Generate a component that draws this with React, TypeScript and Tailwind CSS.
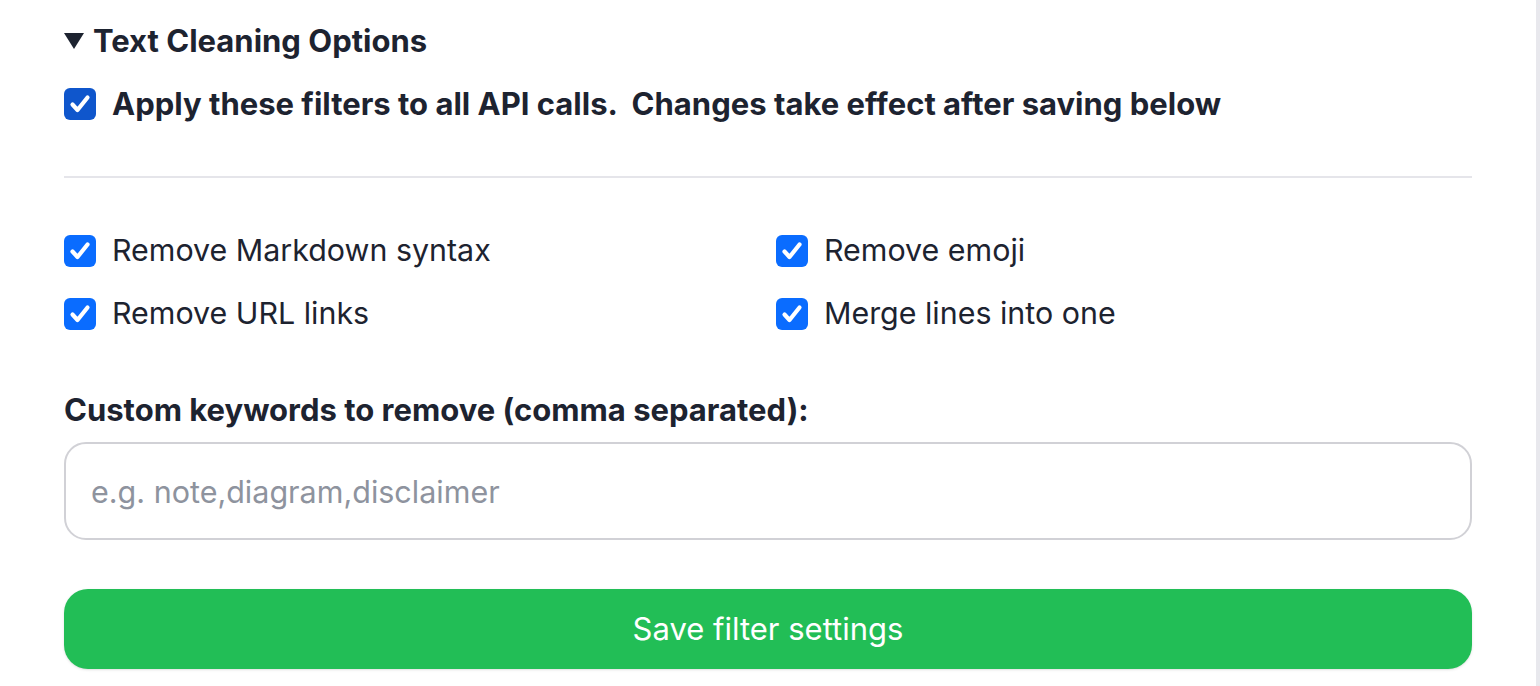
import React, { useState } from 'react';

const Check: React.FC<{ checked: boolean; dark?: boolean; onToggle: () => void }> = ({ checked, dark, onToggle }) => (
  <span
    onClick={onToggle}
    className={`flex h-8 w-8 shrink-0 items-center justify-center rounded-[6px] ${
      checked ? (dark ? 'bg-[#0f56cc]' : 'bg-[#0a6cff]') : 'border-2 border-[#c7c7cc] bg-white'
    }`}
  >
    {checked && (
      <svg viewBox="0 0 32 32" className="h-8 w-8">
        <polyline
          points="8.5,16.5 13.5,22 23.5,9.5"
          fill="none"
          stroke="white"
          strokeWidth="4.2"
          strokeLinecap="round"
          strokeLinejoin="round"
        />
      </svg>
    )}
  </span>
);

const filters = [
  { id: 'markdown', label: 'Remove Markdown syntax' },
  { id: 'emoji', label: 'Remove emoji' },
  { id: 'urls', label: 'Remove URL links' },
  { id: 'merge', label: 'Merge lines into one' },
];

export default function App() {
  const [applyAll, setApplyAll] = useState(true);
  const [opts, setOpts] = useState<Record<string, boolean>>({
    markdown: true,
    emoji: true,
    urls: true,
    merge: true,
  });
  const [keywords, setKeywords] = useState('');

  return (
    <div className="flex h-[686px] w-[1540px] bg-white font-['Inter',sans-serif] text-[#1d2330]">
      <div className="flex-1 px-16 pt-[23px]">
        <div className="flex h-9 items-center gap-[9px] text-[31px] font-bold">
          <svg viewBox="0 0 20 16" className="h-4 w-5">
            <polygon points="0,0 20,0 10,16" fill="#1d2330" />
          </svg>
          <span>Text Cleaning Options</span>
        </div>

        <label className="mt-[27px] flex h-9 items-center gap-4 text-[31px] font-bold">
          <Check checked={applyAll} dark onToggle={() => setApplyAll(!applyAll)} />
          <span className="whitespace-pre">Apply these filters to all API calls.  Changes take effect after saving below</span>
        </label>

        <div className="mt-[54px] h-[2px] bg-[#e5e5ea]" />

        <div className="mt-[55px] grid grid-cols-2 gap-x-4 gap-y-[27px]">
          {filters.map((f) => (
            <label key={f.id} className="flex h-9 items-center gap-4 text-[30.4px]">
              <Check checked={opts[f.id]} onToggle={() => setOpts({ ...opts, [f.id]: !opts[f.id] })} />
              <span>{f.label}</span>
            </label>
          ))}
        </div>

        <div className="mt-[60px] flex h-9 items-center text-[31px] font-bold">
          Custom keywords to remove (comma separated):
        </div>

        <input
          value={keywords}
          onChange={(e) => setKeywords(e.target.value)}
          placeholder="e.g. note,diagram,disclaimer"
          className="mt-[14px] block h-[98px] w-full rounded-[22px] border-2 border-[#d1d1d6] bg-white px-[25px] text-[30.5px] outline-none placeholder:text-[#8e939e]"
        />

        <button className="mt-[49px] block h-[80px] w-full rounded-[24px] bg-[#22be56] text-[31px] text-white shadow-sm">
          Save filter settings
        </button>
      </div>
      <div className="w-1 bg-[#e8e8ed]" />
    </div>
  );
}
